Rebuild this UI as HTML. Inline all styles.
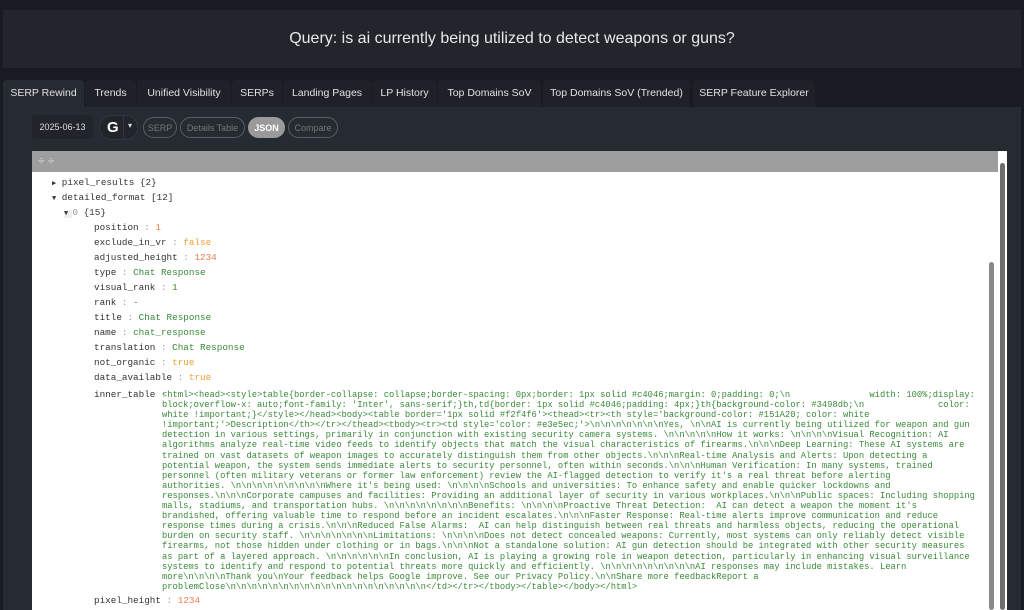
<!DOCTYPE html>
<html><head><meta charset="utf-8"><style>
body{margin:0;width:1024px;height:610px;overflow:hidden;background:#181b22;font-family:"Liberation Sans",sans-serif;position:relative}
.hdr{position:absolute;left:3px;top:10px;width:1018px;height:58px;background:#22252c;color:#e8e8e8;font-size:16px;text-align:center;line-height:58px}
.tabs{position:absolute;top:80px;left:3px;height:27px}
.tab{position:absolute;top:0;height:27px;line-height:27px;background:#1e2128;color:#e0e0e0;font-size:10.5px;text-align:center;border-radius:4px 4px 0 0}
.tab.a{background:#262a31}
.panel{position:absolute;left:3px;top:107px;width:1018px;height:503px;background:#262a31}
.pill{position:absolute;top:117px;height:21px;line-height:21px;border:1px solid #5a5d63;border-radius:11px;color:#777;font-size:9px;text-align:center;box-sizing:border-box}
.viewer{position:absolute;left:32px;top:151px;width:966px;height:459px;background:#fff}
.bar{position:absolute;left:32px;top:151px;width:968px;height:21px;background:#9e9e9e}
.row{position:absolute;font-size:9.3px;color:#333;white-space:pre;font-family:"Liberation Mono",monospace}
.g{color:#3a8a3a}.o{color:#f07c4c}.f{color:#f0a030}.c{color:#999}
.it{position:absolute;left:162px;top:390px;font-size:8.8px;line-height:10.1px;color:#3a8a3a;white-space:pre;font-family:"Liberation Mono",monospace}
</style></head><body>
<div class="hdr">Query: is ai currently being utilized to detect weapons or guns?</div>
<div class="tabs">
<div class="tab a" style="left:0;width:81px">SERP Rewind</div>
<div class="tab" style="left:82px;width:51px">Trends</div>
<div class="tab" style="left:134px;width:94px">Unified Visibility</div>
<div class="tab" style="left:229px;width:50px">SERPs</div>
<div class="tab" style="left:280px;width:88px">Landing Pages</div>
<div class="tab" style="left:369px;width:65px">LP History</div>
<div class="tab" style="left:435px;width:103px">Top Domains SoV</div>
<div class="tab" style="left:540px;width:147px">Top Domains SoV (Trended)</div>
<div class="tab" style="left:690px;width:122px">SERP Feature Explorer</div>
</div>
<div class="panel"></div>
<div style="position:absolute;left:32px;top:115px;width:61px;height:24px;background:#21242b;border-radius:4px;color:#ddd;font-size:9px;line-height:24px;text-align:center">2025-06-13</div>
<div style="position:absolute;left:99px;top:115px;width:39px;height:25px;background:#21242b;border-radius:12px;border:1px solid #33363c;box-sizing:border-box"><span style="position:absolute;left:7px;top:3px;color:#fff;font-weight:bold;font-size:15px">G</span><span style="position:absolute;left:23px;top:0;width:1px;height:23px;background:#33363c"></span><span style="position:absolute;left:28px;top:5px;color:#ddd;font-size:8px">▾</span></div>
<div class="pill" style="left:143px;width:34px">SERP</div>
<div class="pill" style="left:180px;width:65px">Details Table</div>
<div class="pill" style="left:248px;width:37px;background:#9a9a9a;border-color:#9a9a9a;color:#fff;font-weight:bold">JSON</div>
<div class="pill" style="left:288px;width:50px">Compare</div>
<div class="viewer"></div>
<div class="bar"><span style="position:absolute;left:6px;top:3px;color:#ddd;font-size:12px">÷ ÷</span></div>
<div style="position:absolute;left:998px;top:151px;width:9px;height:459px;background:#fff"></div>
<div style="position:absolute;left:1000px;top:163px;width:5px;height:447px;background:#6d6d6d;border-radius:3px"></div>
<div style="position:absolute;left:989px;top:262px;width:5px;height:348px;background:#8a8a8a;border-radius:3px"></div>
<div class="row" style="left:52px;top:177px"><span style="font-size:7px">▶</span> pixel_results {2}</div>
<div class="row" style="left:52px;top:192px"><span style="font-size:7px">▼</span> detailed_format [12]</div>
<div class="row" style="left:64px;top:207px"><span style="background:#eee;font-size:7px">▼ </span><span class="c">0</span> {15}</div>
<div class="row" style="left:94px;top:222px">position<span class="c"> : </span><span class="o">1</span></div>
<div class="row" style="left:94px;top:237px">exclude_in_vr<span class="c"> : </span><span class="f">false</span></div>
<div class="row" style="left:94px;top:252px">adjusted_height<span class="c"> : </span><span class="o">1234</span></div>
<div class="row" style="left:94px;top:267px">type<span class="c"> : </span><span class="g">Chat Response</span></div>
<div class="row" style="left:94px;top:282px">visual_rank<span class="c"> : </span><span class="g">1</span></div>
<div class="row" style="left:94px;top:297px">rank<span class="c"> : </span><span class="g">-</span></div>
<div class="row" style="left:94px;top:312px">title<span class="c"> : </span><span class="g">Chat Response</span></div>
<div class="row" style="left:94px;top:327px">name<span class="c"> : </span><span class="g">chat_response</span></div>
<div class="row" style="left:94px;top:342px">translation<span class="c"> : </span><span class="g">Chat Response</span></div>
<div class="row" style="left:94px;top:357px">not_organic<span class="c"> : </span><span class="f">true</span></div>
<div class="row" style="left:94px;top:372px">data_available<span class="c"> : </span><span class="f">true</span></div>
<div class="row" style="left:94px;top:389px">inner_table<span class="c"> : </span></div>
<div class="it">&lt;html&gt;&lt;head&gt;&lt;style&gt;table{border-collapse: collapse;border-spacing: 0px;border: 1px solid #c4046;margin: 0;padding: 0;\n               width: 100%;display:
block;overflow-x: auto;font-family: 'Inter', sans-serif;}th,td{border: 1px solid #c4046;padding: 4px;}th{background-color: #3498db;\n              color:
white !important;}&lt;/style&gt;&lt;/head&gt;&lt;body&gt;&lt;table border='1px solid #f2f4f6'&gt;&lt;thead&gt;&lt;tr&gt;&lt;th style='background-color: #151A20; color: white
!important;'&gt;Description&lt;/th&gt;&lt;/tr&gt;&lt;/thead&gt;&lt;tbody&gt;&lt;tr&gt;&lt;td style='color: #e3e5ec;'&gt;\n\n\n\n\n\n\nYes, \n\nAI is currently being utilized for weapon and gun
detection in various settings, primarily in conjunction with existing security camera systems. \n\n\n\n\nHow it works: \n\n\n\nVisual Recognition: AI
algorithms analyze real-time video feeds to identify objects that match the visual characteristics of firearms.\n\n\nDeep Learning: These AI systems are
trained on vast datasets of weapon images to accurately distinguish them from other objects.\n\n\nReal-time Analysis and Alerts: Upon detecting a
potential weapon, the system sends immediate alerts to security personnel, often within seconds.\n\n\nHuman Verification: In many systems, trained
personnel (often military veterans or former law enforcement) review the AI-flagged detection to verify it's a real threat before alerting
authorities. \n\n\n\n\n\n\n\n\nWhere it's being used: \n\n\n\nSchools and universities: To enhance safety and enable quicker lockdowns and
responses.\n\n\nCorporate campuses and facilities: Providing an additional layer of security in various workplaces.\n\n\nPublic spaces: Including shopping
malls, stadiums, and transportation hubs. \n\n\n\n\n\n\n\nBenefits: \n\n\n\nProactive Threat Detection:  AI can detect a weapon the moment it's
brandished, offering valuable time to respond before an incident escalates.\n\n\nFaster Response: Real-time alerts improve communication and reduce
response times during a crisis.\n\n\nReduced False Alarms:  AI can help distinguish between real threats and harmless objects, reducing the operational
burden on security staff. \n\n\n\n\n\n\nLimitations: \n\n\n\nDoes not detect concealed weapons: Currently, most systems can only reliably detect visible
firearms, not those hidden under clothing or in bags.\n\n\nNot a standalone solution: AI gun detection should be integrated with other security measures
as part of a layered approach. \n\n\n\n\n\nIn conclusion, AI is playing a growing role in weapon detection, particularly in enhancing visual surveillance
systems to identify and respond to potential threats more quickly and efficiently. \n\n\n\n\n\n\n\n\nAI responses may include mistakes. Learn
more\n\n\n\nThank you\nYour feedback helps Google improve. See our Privacy Policy.\n\nShare more feedbackReport a
problemClose\n\n\n\n\n\n\n\n\n\n\n\n\n\n\n\n\n\n\n&lt;/td&gt;&lt;/tr&gt;&lt;/tbody&gt;&lt;/table&gt;&lt;/body&gt;&lt;/html&gt;</div>
<div class="row" style="left:94px;top:595px">pixel_height<span class="c"> : </span><span class="o">1234</span></div>
</body></html>
